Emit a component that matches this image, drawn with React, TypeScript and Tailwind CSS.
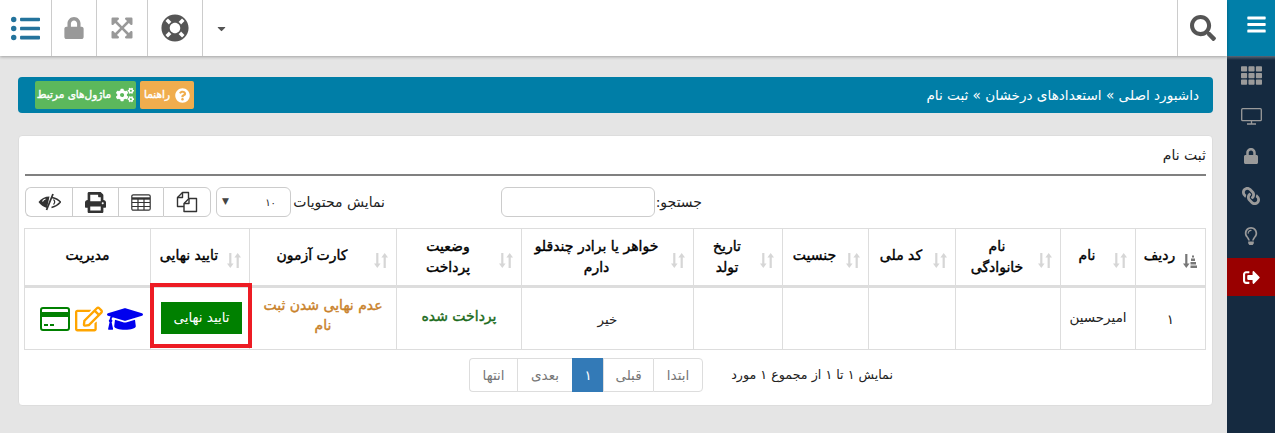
import React from "react";
import {
  FaBars, FaSearch, FaLifeRing, FaExpandArrowsAlt, FaLock, FaListUl, FaTh, FaLink, FaSignOutAlt,
  FaGraduationCap, FaRegEdit, FaPrint, FaCogs, FaQuestionCircle, FaCaretDown, FaRegLightbulb,
} from "react-icons/fa";

const Sort = ({ active }: { active?: boolean }) => (
  <svg width="14" height="15" viewBox="0 0 14 15" className={`shrink-0 mr-[8px] mt-[6px] ${active ? "text-[#777]" : "text-[#d6d6d6]"}`} fill="currentColor">
    {active ? (
      <>
        <path d="M2.2 1h2.2v9.5h2.2L3.3 15 0 10.500h2.200z" />
        <path d="M9 2.500h2v2H9zM8 5.500h4v2.500H8zM7.500 9h5.500v2.500H7.500zM7.500 12.500H14V15H7.500z" />
      </>
    ) : (
      <>
        <path d="M2.200 0h2.200v10.500h2.200L3.300 15 0 10.500h2.200z" />
        <path d="M9.600 15h2.200V4.500H14L10.700 0 7.400 4.500h2.200z" />
      </>
    )}
  </svg>
);

const BOLD = "[-webkit-text-stroke:0.4px_currentColor]";

const Th = ({ w, children, active }: { w: string; children: React.ReactNode; active?: boolean }) => (
  <th className={`${w} border border-[#ddd] border-b-[3px] p-0 font-normal align-middle`}>
    <div className="flex items-center h-[56px]">
      <Sort active={active} />
      <span className={`flex-1 text-center leading-[21px] text-black text-[14px] ${BOLD} ${typeof children === "string" ? "pb-[4px]" : ""}`}>{children}</span>
    </div>
  </th>
);

const Td = ({ children, className = "" }: { children?: React.ReactNode; className?: string }) => (
  <td className={`border border-[#ddd] text-center align-middle text-[13.5px] leading-[20px] px-2 ${className}`}>{children}</td>
);

const Tool = ({ children, w, first, last }: { children: React.ReactNode; w: string; first?: boolean; last?: boolean }) => (
  <div className={`${w} h-[30px] flex items-center justify-center text-[#333] bg-white border-y border-[#ccc] border-l ${first ? "rounded-r-md border-r" : ""} ${last ? "rounded-l-md" : ""}`}>{children}</div>
);

const Page = ({ children, active, w, first, last }: { children: React.ReactNode; active?: boolean; w: string; first?: boolean; last?: boolean }) => (
  <div className={`${w} h-[34px] flex items-center justify-center text-[13.5px] border-y border-l ${active ? "bg-[#337ab7] border-[#337ab7] text-white" : "bg-white border-[#ddd] text-[#777]"} ${first ? "rounded-r border-r" : ""} ${last ? "rounded-l" : ""}`}>{children}</div>
);

const TopCell = ({ w, children }: { w: string; children?: React.ReactNode }) => (
  <div className={`${w} h-full flex items-center justify-center border-l border-[#ccc]`}>{children}</div>
);

const SideItem = ({ h, children }: { h: string; children: React.ReactNode }) => (
  <div className={`${h} flex items-center justify-center text-[#9a9a9a]`}>{children}</div>
);

const DesktopIcon = () => (
  <svg width="21" height="17" viewBox="0 0 21 17" fill="none" stroke="currentColor" strokeWidth="1.3">
    <rect x="0.700" y="0.700" width="19.600" height="12" rx="1" />
    <path d="M10.500 12.700v3M6 16h9" />
  </svg>
);

const FilesIcon = () => (
  <svg width="22" height="22" viewBox="0 0 22 22" fill="none" stroke="#333" strokeWidth="1.400" strokeLinejoin="round">
    <path d="M12.500 7.500V1.500h-6l-5 5v9H8" />
    <path d="M6.500 1.500v5h-5" />
    <path d="M13 7.500 8 12.500v8h12.500v-13z" />
    <path d="M13 7.500v5H8" />
  </svg>
);

const TableIcon = () => (
  <svg width="20" height="17" viewBox="0 0 20 17" fill="none" stroke="#333" strokeWidth="1.200">
    <rect x="0.800" y="0.800" width="18.400" height="15.400" rx="1.500" />
    <path d="M1 4.500h18" strokeWidth="2.400" />
    <path d="M1 8.500h18M1 12.500h18M7 4v12M13 4v12" />
  </svg>
);

const EyeIcon = () => (
  <svg width="23" height="18" viewBox="0 0 23 18" fill="none">
    <path d="M.5 9C3 5.500 7 3.500 11.500 3.500L9 15C5.500 14 2.500 12 .5 9z" fill="#333" />
    <path d="M14 4.500c3.500.8 6.500 2.200 8.500 4.500-2 2.500-5 4.500-9 5.500" stroke="#333" strokeWidth="1.300" />
    <path d="M15.500 6.500c1.500 1.500 1.500 3.500 0 5" stroke="#333" strokeWidth="1.100" />
    <path d="M15 1 8.500 17" stroke="#333" strokeWidth="1.800" />
    <path d="M7.500 6C6 6.500 5 7.500 4.500 8.500" stroke="#fff" strokeWidth="1.100" />
  </svg>
);

export default function App() {
  return (
    <div dir="rtl" className="w-[1275px] h-[433px] overflow-hidden flex bg-[#e5e5e5] text-[#222]" style={{ fontFamily: '"DejaVu Sans", "Noto Sans", sans-serif' }}>
      <aside className="w-[48px] h-full shrink-0 bg-[#152a40] flex flex-col">
        <div className="h-[56px] bg-[#017fa9] flex items-start justify-center text-white text-[21px] pt-[14px] pl-[10px]"><FaBars /></div>
        <div className="h-[4px] bg-gradient-to-b from-[#5b6877] to-[#152a40]" />
        <SideItem h="h-[31px]"><FaTh className="text-[21px]" /></SideItem>
        <div className="mt-[5px]">
          <SideItem h="h-[40px]"><DesktopIcon /></SideItem>
          <SideItem h="h-[40px]"><FaLock className="text-[16px]" /></SideItem>
          <SideItem h="h-[40px]"><FaLink className="text-[18px] -scale-x-100" /></SideItem>
          <SideItem h="h-[40px]"><FaRegLightbulb className="text-[18px]" /></SideItem>
        </div>
        <div className="mt-[2px] h-[38px] bg-[#990000] flex items-center justify-center text-white text-[17px]"><FaSignOutAlt /></div>
      </aside>

      <div className="flex-1 min-w-0 flex flex-col">
        <header className="h-[56px] shrink-0 bg-white flex shadow-[0_1px_3px_rgba(0,0,0,0.3)]">
          <div className="w-[50px] h-full flex items-center justify-center text-[#555] text-[26px] border-l border-[#ccc]"><FaSearch /></div>
          <div className="flex-1" />
          <div className="w-[178px] h-full flex items-center justify-end pl-[12px] border-l border-[#ccc]"><FaCaretDown className="text-[#555] text-[13px]" /></div>
          <TopCell w="w-[55px]"><FaLifeRing className="text-[#555] text-[28px]" /></TopCell>
          <TopCell w="w-[51px]"><FaExpandArrowsAlt className="text-[#999] text-[24px]" /></TopCell>
          <TopCell w="w-[45px]"><FaLock className="text-[#999] text-[22px]" /></TopCell>
          <div className="w-[51px] h-full flex items-center justify-center text-[#23739c] text-[29px]"><FaListUl /></div>
        </header>

        <main className="pr-[14px] pl-[18px] pt-[21px]">
          <div className="h-[36px] bg-[#007ea7] rounded flex items-center justify-between pr-[14px] pl-[17px] text-white text-[13.6px]">
            <span>داشبورد اصلی » استعدادهای درخشان » ثبت نام</span>
            <div className={`flex items-center gap-[4px] text-[10.5px] whitespace-nowrap ${BOLD}`}>
              <span className="h-[28px] w-[54px] bg-[#f0ad4e] rounded-[2px] flex items-center justify-center gap-[5px]"><FaQuestionCircle className="text-[15px]" />راهنما</span>
              <span className="h-[28px] w-[101px] bg-[#5cb85c] rounded-[2px] flex items-center justify-center gap-[5px]"><FaCogs className="text-[18px]" />ماژول‌های مرتبط</span>
            </div>
          </div>

          <section className="mt-[22px] h-[271px] bg-white rounded border border-[#ddd] px-[6px]">
            <h2 className="h-[40px] border-b-2 border-[#808080] text-[14px] font-normal flex items-center pt-[1px]">ثبت نام</h2>

            <div className="h-[52px] flex items-center text-[14px]">
              <span className="mr-[504px] w-[47px] whitespace-nowrap">جستجو:</span>
              <div className="w-[154px] h-[30px] border border-[#ccc] rounded-md bg-white" />
              <span className="mr-[116px] w-[94px] whitespace-nowrap">نمایش محتویات</span>
              <div className="w-[75px] h-[30px] border border-[#ccc] rounded-md flex items-center justify-between pr-[14px] pl-[5px] text-[10px]">
                <span>۱۰</span><span className="text-[9px] text-[#444]">▼</span>
              </div>
              <div className="mr-[5px] flex">
                <Tool w="w-[48px]" first><FilesIcon /></Tool>
                <Tool w="w-[45px]"><TableIcon /></Tool>
                <Tool w="w-[46px]"><FaPrint className="text-[21px]" /></Tool>
                <Tool w="w-[47px]" last><EyeIcon /></Tool>
              </div>
            </div>

            <table className="w-[1181px] table-fixed border-collapse">
              <thead>
                <tr>
                  <Th w="w-[70px]" active>ردیف</Th>
                  <Th w="w-[75px]">نام</Th>
                  <Th w="w-[105px]">نام<br />خانوادگی</Th>
                  <Th w="w-[87px]">کد ملی</Th>
                  <Th w="w-[86px]">جنسیت</Th>
                  <Th w="w-[89px]">تاریخ<br />تولد</Th>
                  <Th w="w-[172px]">خواهر یا برادر چندقلو<br />دارم</Th>
                  <Th w="w-[125px]">وضعیت<br />پرداخت</Th>
                  <Th w="w-[147px]">کارت آزمون</Th>
                  <Th w="w-[99px]">تایید نهایی</Th>
                  <th className={`w-[126px] border border-[#ddd] border-b-[3px] text-[14px] font-normal text-black pb-[4px] ${BOLD}`}>مدیریت</th>
                </tr>
              </thead>
              <tbody>
                <tr className="h-[63px]">
                  <Td>۱</Td>
                  <Td className="pb-[3px]">امیرحسین</Td>
                  <Td />
                  <Td />
                  <Td />
                  <Td />
                  <Td>خیر</Td>
                  <Td className={`text-[#1c6b1c] text-[14px] pb-[5px] ${BOLD}`}>پرداخت شده</Td>
                  <Td className={`text-[#c9822b] text-[14px] pb-[7px] ${BOLD}`}>عدم نهایی شدن ثبت نام</Td>
                  <td className="relative border border-[#ddd] p-0">
                    <div className="w-[81px] h-[32px] mr-[7px] mb-[2px] bg-[#008000] text-white text-[13.5px] flex items-center justify-center">تایید نهایی</div>
                    <div className="absolute top-[-5px] bottom-[1px] left-[-1px] right-[-3px] border-4 border-[#ed1c24]" />
                  </td>
                  <td className="border border-[#ddd]">
                    <div className="flex items-center justify-center gap-[4px] pl-[7px]">
                      <FaGraduationCap className="text-[#0000ee] text-[36px]" />
                      <FaRegEdit className="text-[#ffa500] text-[28px]" />
                      <svg width="30" height="24" viewBox="0 0 30 24" fill="none" className="mr-[1px]">
                        <rect x="1" y="1" width="28" height="22" rx="2" stroke="#008000" strokeWidth="2" />
                        <rect x="1" y="5" width="28" height="5" fill="#008000" />
                        <path d="M4 18h4M10 18h4" stroke="#008000" strokeWidth="2" />
                      </svg>
                    </div>
                  </td>
                </tr>
              </tbody>
            </table>

            <div className="flex items-center mt-[8px]">
              <span className="mr-[313px] w-[190px] text-[12.7px] whitespace-nowrap">نمایش ۱ تا ۱ از مجموع ۱ مورد</span>
              <div className="flex">
                <Page w="w-[50px]" first>ابتدا</Page>
                <Page w="w-[50px]">قبلی</Page>
                <Page w="w-[31px]" active>۱</Page>
                <Page w="w-[55px]">بعدی</Page>
                <Page w="w-[48px]" last>انتها</Page>
              </div>
            </div>
          </section>
        </main>
      </div>
    </div>
  );
}
